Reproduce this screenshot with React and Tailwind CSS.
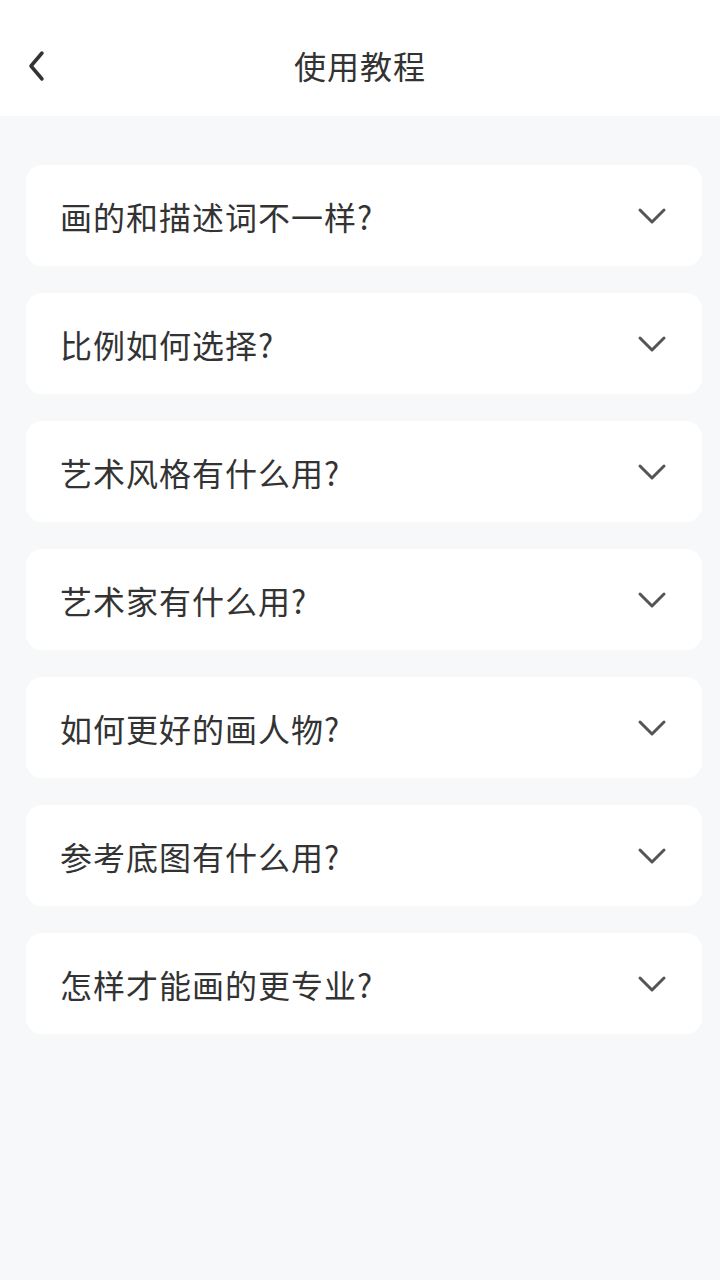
import { useState } from 'react'

const questions = [
  '画的和描述词不一样?',
  '比例如何选择?',
  '艺术风格有什么用?',
  '艺术家有什么用?',
  '如何更好的画人物?',
  '参考底图有什么用?',
  '怎样才能画的更专业?',
]

const font = { fontFamily: '"Noto Sans CJK SC", "Noto Sans", sans-serif' }

function ChevronDown() {
  return (
    <svg width="30" height="18" viewBox="0 0 30 18" fill="none">
      <path d="M3 3L15 15L27 3" stroke="#555" strokeWidth="3" strokeLinecap="round" strokeLinejoin="round" />
    </svg>
  )
}

export default function App() {
  const [open, setOpen] = useState(null)

  return (
    <div className="w-[720px] h-[1280px] bg-[#f7f8fa] flex flex-col" style={font}>
      {/* 顶部栏 */}
      <div className="h-[116px] bg-white flex items-center relative shrink-0">
        <button className="absolute left-[22px] top-[45px] p-1">
          <svg width="22" height="34" viewBox="0 0 22 34" fill="none">
            <path d="M16 4L5 17L16 30" stroke="#333" strokeWidth="3.5" strokeLinecap="round" strokeLinejoin="round" />
          </svg>
        </button>
        <h1 className="w-full text-center text-[32px] tracking-[1px] text-[#333] leading-none mt-[14px]">使用教程</h1>
      </div>

      {/* 问题列表 */}
      <div className="pl-[26px] pr-[18px] pt-[49px] flex flex-col gap-[27px]">
        {questions.map((q, i) => (
          <div key={i} onClick={() => setOpen(open === i ? null : i)}
            className="bg-white rounded-[16px] h-[101px] flex items-center justify-between pl-[34px] pr-[35px]">
            <span className="text-[32px] tracking-[1px] text-[#333] leading-none">{q}</span>
            <ChevronDown />
          </div>
        ))}
      </div>
    </div>
  )
}
